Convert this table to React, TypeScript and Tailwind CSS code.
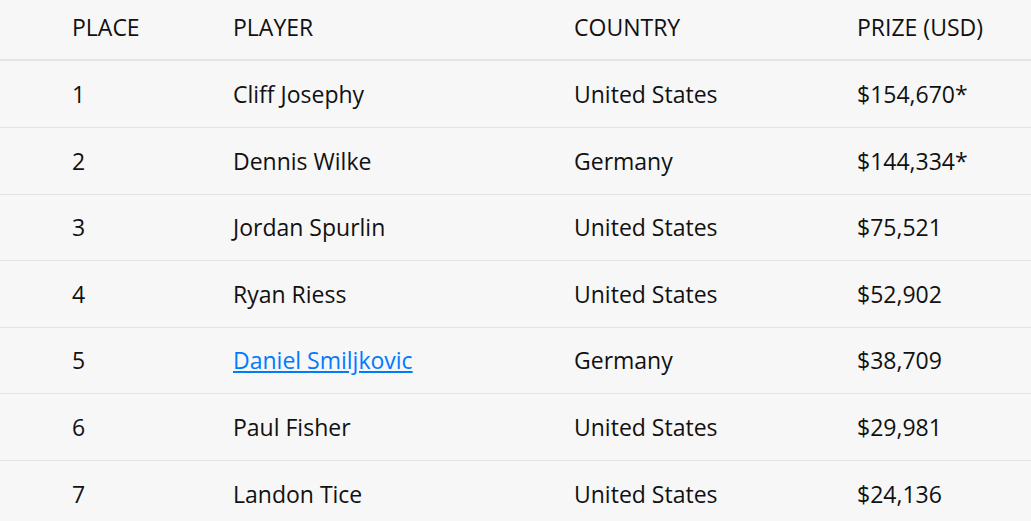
const rows: Array<{ place: number; player: string; country: string; prize: string; link?: boolean }> = [
  { place: 1, player: 'Cliff Josephy', country: 'United States', prize: '$154,670*' },
  { place: 2, player: 'Dennis Wilke', country: 'Germany', prize: '$144,334*' },
  { place: 3, player: 'Jordan Spurlin', country: 'United States', prize: '$75,521' },
  { place: 4, player: 'Ryan Riess', country: 'United States', prize: '$52,902' },
  { place: 5, player: 'Daniel Smiljkovic', country: 'Germany', prize: '$38,709', link: true },
  { place: 6, player: 'Paul Fisher', country: 'United States', prize: '$29,981' },
  { place: 7, player: 'Landon Tice', country: 'United States', prize: '$24,136' },
]

const App: React.FC = () => {
  return (
    <div className="w-[1031px] h-[521px] overflow-hidden bg-[#f7f7f7] text-[#111] text-[23px] font-['Open_Sans',sans-serif]">
      <div className="flex items-center h-[61.4px] pl-[72px] pb-[5px] border-b-2 border-[#e3e3e3]">
        <div className="w-[161px]">PLACE</div>
        <div className="w-[341px]">PLAYER</div>
        <div className="w-[283px]">COUNTRY</div>
        <div className="flex-1">PRIZE (USD)</div>
      </div>
      {rows.map((row) => (
        <div
          key={row.place}
          className="flex items-center h-[66.6px] pl-[72px] border-b border-[#e3e3e3]"
        >
          <div className="w-[161px]">{row.place}</div>
          <div className="w-[341px]">
            {row.link ? (
              <a href="#" className="text-[#007bff] underline">
                {row.player}
              </a>
            ) : (
              row.player
            )}
          </div>
          <div className="w-[283px]">{row.country}</div>
          <div className="flex-1">{row.prize}</div>
        </div>
      ))}
    </div>
  )
}

export default App
